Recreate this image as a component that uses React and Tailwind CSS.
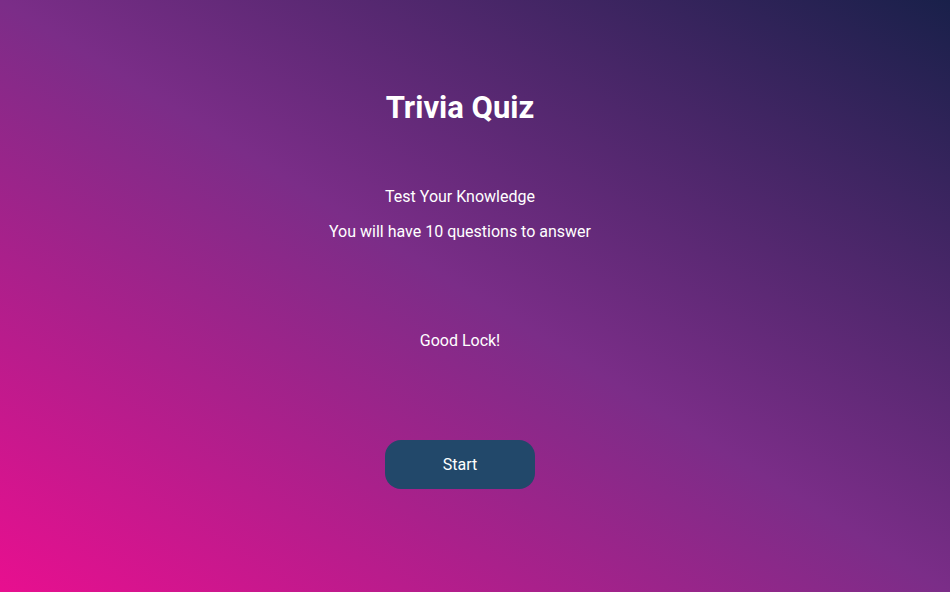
export default function App() {
  return (
    <div className="w-[950px] h-[592px] text-white bg-[linear-gradient(to_top_right,#e80f8f_0%,#7b2d88_50%,#19204a_100%)] font-['Roboto',sans-serif]">
      <div className="w-[920px] flex flex-col items-center">
        <h1 className="mt-[87px] h-[42px] leading-[42px] text-[31px] font-bold">Trivia Quiz</h1>
        <p className="mt-[57px] text-[16px] leading-[22px]">Test Your Knowledge</p>
        <p className="mt-[13px] text-[16px] leading-[22px]">You will have 10 questions to answer</p>
        <p className="mt-[87px] text-[16px] leading-[22px]">Good Lock!</p>
        <button className="mt-[88px] w-[150px] h-[49px] rounded-[16px] bg-[#22486a] text-white text-[16px]">Start</button>
      </div>
    </div>
  );
}
